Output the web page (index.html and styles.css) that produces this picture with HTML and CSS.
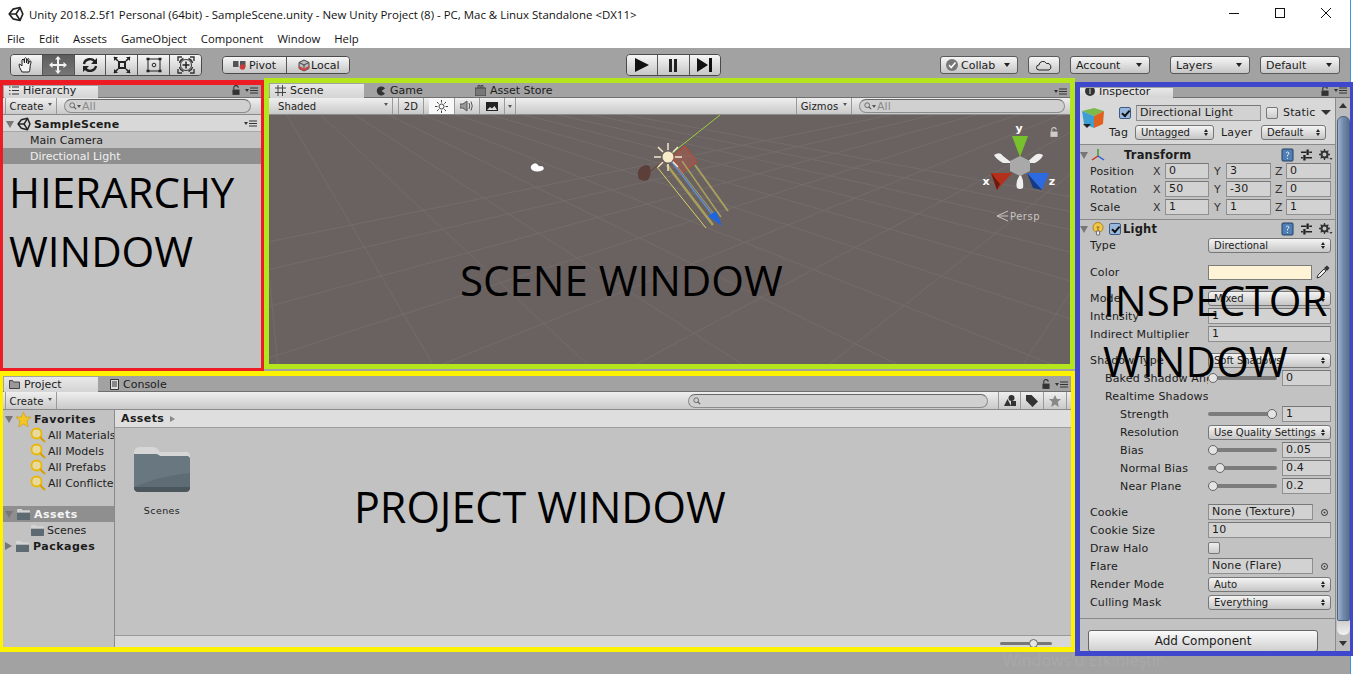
FILE: index.html
```html
<!DOCTYPE html>
<html lang="en">
<head>
  <meta charset="UTF-8">
  <title>Unity 2018.2.5f1 Personal</title>
  <link rel="stylesheet" href="styles.css">
</head>
<body>
  <svg class="defs" width="0" height="0">
    <symbol id="unity" viewBox="0 0 16 16">
      <path d="M1.200 8L5 3.200 12 1.500 14.800 8 12 14.500 5 12.800z" fill="none" stroke="#222" stroke-width="1.700" stroke-linejoin="round"/>
      <path d="M1.500 8H8L12 1.800M8 8l4 6.200" fill="none" stroke="#222" stroke-width="1.600"/>
    </symbol>
    <symbol id="mag" viewBox="0 0 16 16">
      <circle cx="6.500" cy="6.500" r="5" fill="#e8d9a0" stroke="#e8b800" stroke-width="1.800"/>
      <path d="M10 10l5 5" stroke="#d6a300" stroke-width="2.200"/>
    </symbol>
    <symbol id="folder" viewBox="0 0 16 14">
      <path d="M1 2q0-1 1-1h4l1 1.500h7q1 0 1 1V5H1z" fill="#d4d4d4"/>
      <path d="M1 5h14v7q0 1-1 1H2q-1 0-1-1z" fill="#5d6a72"/>
    </symbol>
    <symbol id="help" viewBox="0 0 13 14">
      <rect x="1" y="1" width="11" height="12" rx="1" fill="#4f7fb5" stroke="#243f60"/>
      <path d="M5 5q1.500-2 3 0 0 1.500-1.500 2v1.500M6.500 10v1" stroke="#dbe7f3" fill="none"/>
    </symbol>
    <symbol id="sliders" viewBox="0 0 12 12">
      <path d="M0 3h6M9 3h3M0 9h2M5 9h7" stroke="#222" stroke-width="1.500"/>
      <rect x="6" y="0" width="2.500" height="6" fill="#222"/>
      <rect x="2.500" y="6" width="2.500" height="6" fill="#222"/>
    </symbol>
    <symbol id="gear" viewBox="0 0 14 12">
      <circle cx="5.500" cy="5.500" r="3" fill="none" stroke="#333" stroke-width="2"/>
      <path d="M5.500 0v11M0 5.500h11M1.600 1.600l7.800 7.800M9.400 1.600l-7.800 7.800" stroke="#333" stroke-width="1.300" stroke-dasharray="2.500 6"/>
      <path d="M10.500 9h3l-1.500 2z" fill="#333"/>
    </symbol>
    <symbol id="lock" viewBox="0 0 9 11">
      <path d="M2 5V3a2.500 2.500 0 0 1 5 0" fill="none" stroke="currentColor" stroke-width="1.300"/>
      <rect x="0.500" y="5" width="8" height="6" fill="currentColor"/>
    </symbol>
    <symbol id="tabmenu" viewBox="0 0 13 7">
      <path d="M0 2h4L2 5z" fill="#333"/>
      <path d="M5 1h8M5 3.500h8M5 6h8" stroke="#333" stroke-width="1.200"/>
    </symbol>
    <symbol id="searchglass" viewBox="0 0 10 10">
      <circle cx="4" cy="4" r="3" fill="none" stroke="#555"/>
      <path d="M6 6l3 3" stroke="#555" stroke-width="1.300"/>
    </symbol>
  </svg>

  <header class="titlebar">
    <svg class="title-logo" width="16" height="16"><use href="#unity"/></svg>
    <span class="title-text">Unity 2018.2.5f1 Personal (64bit) - SampleScene.unity - New Unity Project (8) - PC, Mac &amp; Linux Standalone &lt;DX11&gt;</span>
    <div class="win-controls">
      <svg width="12" height="12" viewBox="0 0 12 12"><path d="M1 6.500h10" stroke="#111"/></svg>
      <svg width="12" height="12" viewBox="0 0 12 12"><rect x="1.500" y="1.500" width="9" height="9" fill="none" stroke="#111"/></svg>
      <svg width="12" height="12" viewBox="0 0 12 12"><path d="M1 1l10 10M11 1L1 11" stroke="#111"/></svg>
    </div>
  </header>
  <nav class="menubar">
    <span>File</span><span>Edit</span><span>Assets</span><span>GameObject</span><span>Component</span><span>Window</span><span>Help</span>
  </nav>

  <div class="toolbar">
    <div class="btn-group tools">
      <button class="tool">
        <svg width="18" height="18" viewBox="0 0 18 18"><path d="M5 16Q2 11 2 9t2 0l1 1V4q1-2 2 0l.5 3V2.500q1-1.500 2 0V7l1-4q1.500-1 1.500.5L11 8l2-3q1.500 0 1 1.500-1 3-1 5.500t-1 4z" fill="#f4f4f4" stroke="#222"/></svg>
      </button>
      <button class="tool active">
        <svg width="20" height="20" viewBox="0 0 20 20"><path d="M10 1l3 3.500h-2V9h4.500V7l3.500 3-3.500 3v-2H11v4.500h2L10 19l-3-3.500h2V11H4.500v2L1 10l3.500-3v2H9V4.500H7z" fill="#f2f2f2"/></svg>
      </button>
      <button class="tool">
        <svg width="18" height="18" viewBox="0 0 18 18"><path d="M3 8a6 6 0 0 1 11-2M15 10a6 6 0 0 1-11 2" fill="none" stroke="#222" stroke-width="2.400"/><path d="M16 2v6h-6zM2 16v-6h6z" fill="#222"/></svg>
      </button>
      <button class="tool">
        <svg width="18" height="18" viewBox="0 0 18 18"><rect x="6" y="6" width="6" height="6" fill="none" stroke="#222" stroke-width="2"/><path d="M1 1l4 4M17 1l-4 4M1 17l4-4M17 17l-4-4" stroke="#222" stroke-width="1.600"/><path d="M1 1h4L1 5zM17 1h-4l4 4zM1 17h4l-4-4zM17 17h-4l4-4z" fill="#222"/></svg>
      </button>
      <button class="tool">
        <svg width="18" height="18" viewBox="0 0 18 18"><rect x="3" y="3" width="12" height="12" fill="none" stroke="#222"/><circle cx="9" cy="9" r="1.800" fill="none" stroke="#222"/><path d="M1.500 3h3M13.500 3h3M1.500 15h3M13.500 15h3" stroke="#222" stroke-width="2.400"/></svg>
      </button>
      <button class="tool">
        <svg width="20" height="20" viewBox="0 0 20 20"><circle cx="10" cy="10" r="5.500" fill="none" stroke="#333"/><path d="M10 6.500v7M6.500 10h7" stroke="#222" stroke-width="1.500"/><path d="M2 6V2h4M14 2h4v4M2 14v4h4M14 18h4v-4M3.500 8q.5-3 4-4.500M12.500 3.500q3.500 1.500 4 4.500M3.500 12q.5 3 4 4.500M12.500 16.500q3.500-1.500 4-4.500" fill="none" stroke="#333" stroke-width="1.400"/></svg>
      </button>
    </div>
    <div class="btn-group pivot">
      <button class="pivot-btn">
        <svg width="13" height="11" viewBox="0 0 13 11"><rect x="0" y="1" width="5.500" height="6" fill="#555"/><rect x="7" y="1" width="5.500" height="6" fill="#555"/><circle cx="9.500" cy="7" r="2.800" fill="#cc3b3b"/></svg>
        Pivot
      </button>
      <button class="local-btn">
        <svg width="12" height="13" viewBox="0 0 12 13"><path d="M6 1l5 2.500v6L6 12 1 9.500v-6z" fill="#bbb" stroke="#444"/><path d="M1 7l5 2.500L11 7v2.500L6 12 1 9.500z" fill="#c44"/><path d="M1 3.500L6 6l5-2.500M6 6v3" fill="none" stroke="#444"/></svg>
        Local
      </button>
    </div>
    <div class="btn-group play">
      <button class="play-btn"><svg width="14" height="14" viewBox="0 0 14 14"><path d="M0 0l14 7-14 7z" fill="#111"/></svg></button>
      <button class="play-btn"><svg width="10" height="13" viewBox="0 0 10 13"><path d="M1 0h3v13H1zM6 0h3v13H6z" fill="#222"/></svg></button>
      <button class="play-btn"><svg width="15" height="14" viewBox="0 0 15 14"><path d="M0 0l11 7-11 7zM12 0h3v14h-3z" fill="#111"/></svg></button>
    </div>
    <button class="tb-btn collab">
      <svg width="12" height="12" viewBox="0 0 12 12"><circle cx="6" cy="6" r="6" fill="#777"/><path d="M3 6l2.200 2.500L9.500 3.500" stroke="#fff" stroke-width="1.500" fill="none"/></svg>
      <span>Collab</span><i class="caret"></i>
    </button>
    <button class="tb-btn cloud">
      <svg width="16" height="11" viewBox="0 0 16 11"><path d="M4 10H3a2.500 2.500 0 0 1 0-5 4 4 0 0 1 7.500-1.500A3.500 3.500 0 0 1 13 10z" fill="none" stroke="#222"/></svg>
    </button>
    <button class="tb-btn account"><span>Account</span><i class="caret"></i></button>
    <button class="tb-btn layers"><span>Layers</span><i class="caret"></i></button>
    <button class="tb-btn default-layout"><span>Default</span><i class="caret"></i></button>
  </div>

  <div class="workspace">
    <div class="left-col">
      <div class="top-row">

        <section class="hierarchy">
          <div class="tabstrip">
            <div class="tab">
              <svg width="10" height="9" viewBox="0 0 10 9"><path d="M0 1h1.500M3 1h7M0 4.500h1.500M3 4.500h7M0 8h1.500M3 8h7" stroke="#333"/></svg>
              Hierarchy
            </div>
            <div class="tab-tools"><svg class="lock" width="8" height="10"><use href="#lock"/></svg><svg width="13" height="7"><use href="#tabmenu"/></svg></div>
          </div>
          <div class="strip">
            <span class="strip-btn create">Create<i class="caret small"></i></span>
            <span class="search hier-search"><svg width="8" height="8"><use href="#searchglass"/></svg><i class="caret small"></i>All</span>
          </div>
          <div class="scene-row">
            <i class="fold open"></i>
            <svg width="14" height="14"><use href="#unity"/></svg>
            <b>SampleScene</b>
            <svg class="row-menu" width="13" height="7"><use href="#tabmenu"/></svg>
          </div>
          <div class="hier-item">Main Camera</div>
          <div class="hier-item selected">Directional Light</div>
          <div class="big-label hier-label">HIERARCHY<br>WINDOW</div>
        </section>

        <section class="scene">
          <div class="tabstrip">
            <div class="tab">
              <svg width="11" height="11" viewBox="0 0 11 11"><path d="M3 0v11M7.500 0v11M0 3h11M0 7.500h11" stroke="#444"/></svg>
              Scene
            </div>
            <div class="tab off game-tab">
              <svg width="10" height="10" viewBox="0 0 10 10"><path d="M9 2.500a4.500 4.500 0 1 0 0 5L5.500 5z" fill="#333"/></svg>
              Game
            </div>
            <div class="tab off store-tab">
              <svg width="11" height="11" viewBox="0 0 11 11"><path d="M0 3h11v8H0z" fill="#777" stroke="#444"/><path d="M3 3V.5h2V3M6 3V.5h2V3" fill="none" stroke="#444"/></svg>
              Asset Store
            </div>
            <div class="tab-tools"><svg width="13" height="7"><use href="#tabmenu"/></svg></div>
          </div>
          <div class="strip scene-strip">
            <span class="strip-btn shaded">Shaded<i class="caret small"></i></span>
            <span class="strip-btn two-d">2D</span>
            <span class="strip-btn light-btn">
              <svg width="13" height="13" viewBox="0 0 13 13"><circle cx="6.500" cy="6.500" r="2.500" fill="none" stroke="#444"/><path d="M6.500 0v2.500M6.500 10.500V13M0 6.500h2.500M10.500 6.500H13M2 2l1.700 1.700M9.300 9.300L11 11M11 2L9.300 3.700M3.700 9.300L2 11" stroke="#444"/></svg>
            </span>
            <span class="strip-btn audio-btn">
              <svg width="14" height="12" viewBox="0 0 14 12"><path d="M0 4h3l4-3v10L3 8H0z" fill="#999" stroke="#555"/><path d="M9 3q1.500 3 0 6M11 1.500q2.500 4.500 0 9" fill="none" stroke="#555"/></svg>
            </span>
            <span class="strip-btn image-btn">
              <svg width="12" height="9" viewBox="0 0 12 9"><rect width="12" height="9" fill="#222"/><path d="M1 8l3-3 2 1.500L8.500 4 11 8z" fill="#ddd"/></svg>
            </span>
            <span class="strip-btn image-arrow"><i class="caret small"></i></span>
            <span class="strip-btn gizmos">Gizmos<i class="caret small"></i></span>
            <span class="search scene-search"><svg width="8" height="8"><use href="#searchglass"/></svg><i class="caret small"></i>All</span>
          </div>
          <div class="scene-view">
            <svg class="scene-canvas" width="801" height="249" viewBox="0 0 801 249">
              <path class="grid-major" d="M-23-70L-310 260M-23-70L-150 260M-23-70L10 260M-23-70L170 260M-23-70L330 260M-23-70L490 260M-23-70L650 260M-23-70L810 260M-23-70L970 260M-23-70L1130 260M-23-70L1290 260M-23-70L1450 260M-23-70L1610 260M-23-70L1770 260"/>
              <path class="grid-major" d="M965-70L-653 260M965-70L-453 260M965-70L-253 260M965-70L-53 260M965-70L147 260M965-70L347 260M965-70L547 260M965-70L747 260M965-70L947 260M965-70L1147 260"/>

              <path d="M262 51q3-4 6-2 2 3 5 2 3 2 1 4-6 3-11 0-2-2-1-4z" fill="#fff"/>
              <path d="M372 52q6-4 9 0 2 7-2 13-5 2-9-1-3-7 2-12z" fill="#5a3f3a"/>
              <path d="M372 64L399 42" stroke="#6d3a30"/>
              <path d="M416 31l12 16-15 11-10-16z" fill="#b5574a" fill-opacity=".45" stroke="#c8442c"/>
              <path d="M398 42L451 0" stroke="#9ccf3a"/>
              <path d="M388 52L437 113" stroke="#d9cf63"/>
              <path d="M426 50L459 96" stroke="#a89f5d" stroke-width="2"/>
              <path d="M398 50L444 110" stroke="#a89f5d" stroke-width="2.500"/>
              <path d="M413 46L452 102" stroke="#a89f5d" stroke-width="1.500"/>
              <path d="M404 46L449 104" stroke="#a89f5d"/>
              <path d="M399 42L446 103" stroke="#5f8dd8" stroke-width="1.300"/>
              <path d="M439 101l8-5 6 15z" fill="#1e66e0"/>
              <circle cx="399" cy="42" r="5.500" fill="#f7ecc8"/>
              <path d="M399 28v7M399 49v7M385 42h7M406 42h7M389 32l5 5M404 47l5 5M409 32l-5 5M394 47l-5 5" stroke="#f2e8c4" stroke-width="1.500"/>

              <path d="M734 48q-7-4-9-8 6-4 9 1l9 7zM766 48q7-4 8-8-5-3-9 1l-8 7zM751 60q-5 7-3 13 3 2 6 0 1-7-2-13z" fill="#eee"/>
              <path d="M751 41l10 5v10l-10 5-10-5V46z" fill="#a9a9a9"/>
              <path d="M743 21h16l-8 21z" fill="#76c12c"/>
              <path d="M722 58h21l-15 17z" fill="#b5301a"/>
              <path d="M722 58l6 17 3-6z" fill="#6d1a0e"/>
              <path d="M758 58h22l-7 17z" fill="#2b6ae0"/>
              <path d="M758 58l15 17-9-2z" fill="#123a86"/>
              <text class="axis" x="750" y="17">y</text>
              <text class="axis" x="717" y="70">x</text>
              <text class="axis" x="783" y="70">z</text>
              <path d="M739 96l-11 5 11 5M728 101h11" fill="none" stroke="#c8c4c2"/>
              <text class="persp" x="741" y="105">Persp</text>
              <svg x="781" y="12" width="8" height="10" color="#cfcbc9"><use href="#lock"/></svg>
            </svg>
            <div class="big-label scene-label">SCENE WINDOW</div>
          </div>
        </section>
      </div>

      <section class="project">
        <div class="tabstrip">
          <div class="tab">
            <svg width="11" height="9" viewBox="0 0 11 9"><path d="M.5 8.500v-8h3l1 1.500h6v6.500z" fill="#999" stroke="#444"/></svg>
            Project
          </div>
          <div class="tab off console-tab">
            <svg width="9" height="11" viewBox="0 0 9 11"><path d="M.5.500h8v10h-8z" fill="#ddd" stroke="#333"/><path d="M2 3h5M2 5h5M2 7h5" stroke="#333"/></svg>
            Console
          </div>
          <div class="tab-tools"><svg class="lock" width="8" height="10"><use href="#lock"/></svg><svg width="13" height="7"><use href="#tabmenu"/></svg></div>
        </div>
        <div class="strip project-strip">
          <span class="strip-btn create">Create<i class="caret small"></i></span>
          <span class="search project-search"><svg width="8" height="8"><use href="#searchglass"/></svg></span>
          <span class="strip-btn icon-btn">
            <svg width="12" height="11" viewBox="0 0 12 11"><circle cx="7.500" cy="3" r="3" fill="#333"/><path d="M3.500 4L7 11H0z" fill="#333"/><rect x="7" y="6" width="5" height="5" fill="#333"/></svg>
          </span>
          <span class="strip-btn icon-btn">
            <svg width="12" height="12" viewBox="0 0 12 12"><path d="M0 0h5.500L12 6.500 6.500 12 0 5.500z" fill="#333"/></svg>
          </span>
          <span class="strip-btn icon-btn">
            <svg width="12" height="12" viewBox="0 0 12 12"><path d="M6 0l1.800 4H12L8.800 7l1 5L6 9.500 2.200 12l1-5L0 4h4.200z" fill="#888"/></svg>
          </span>
        </div>
        <div class="project-body">
          <div class="project-tree">
            <div class="tree-row top"><i class="fold open"></i>
              <svg width="15" height="15" viewBox="0 0 12 12"><path d="M6 0l1.800 4H12L8.800 7l1 5L6 9.500 2.200 12l1-5L0 4h4.200z" fill="#f3c623" stroke="#c89b10" stroke-width=".5"/></svg>
              <b>Favorites</b></div>
            <div class="tree-row search-item"><svg width="16" height="16"><use href="#mag"/></svg>All Materials</div>
            <div class="tree-row search-item"><svg width="16" height="16"><use href="#mag"/></svg>All Models</div>
            <div class="tree-row search-item"><svg width="16" height="16"><use href="#mag"/></svg>All Prefabs</div>
            <div class="tree-row search-item"><svg width="16" height="16"><use href="#mag"/></svg>All Conflicted</div>
            <div class="tree-row top selected assets-row"><i class="fold open"></i><svg width="15" height="13"><use href="#folder"/></svg><b>Assets</b></div>
            <div class="tree-row search-item"><svg width="15" height="13"><use href="#folder"/></svg>Scenes</div>
            <div class="tree-row top"><i class="fold"></i><svg width="15" height="13"><use href="#folder"/></svg><b>Packages</b></div>
          </div>
          <div class="project-main">
            <div class="breadcrumb"><b>Assets</b><i class="crumb-arrow"></i></div>
            <div class="asset-area">
              <div class="asset">
                <svg width="58" height="48" viewBox="0 0 58 48">
                  <path d="M1 8q0-6 6-6h12q5 0 7 4l1 1h26q4 0 4 4v8H1z" fill="#d6d6d6"/>
                  <path d="M1 9h20q4 0 6 2h26q4 0 4 4v27q0 5-5 5H6q-5 0-5-5z" fill="#5e6d75"/>
                  <path d="M1 9h20q4 0 6 2h26q4 0 4 4v13Q30 30 1 42z" fill="#687780"/>
                  <path d="M1 42v1q0 4 5 4h46q5 0 5-4v-1z" fill="#4a555c"/>
                </svg>
                <span>Scenes</span>
              </div>
              <div class="big-label project-label">PROJECT WINDOW</div>
            </div>
            <div class="project-footer"><span class="zoom-slider"><i></i></span></div>
          </div>
        </div>
      </section>
    </div>

    <aside class="inspector">
      <div class="tabstrip insp-tabs">
        <div class="tab">
          <svg width="10" height="10" viewBox="0 0 10 10"><circle cx="5" cy="5" r="5" fill="#333"/><path d="M5 2.500V8" stroke="#ddd"/></svg>
          Inspector
        </div>
        <div class="tab-tools"><svg class="lock" width="8" height="10"><use href="#lock"/></svg><svg width="13" height="7"><use href="#tabmenu"/></svg></div>
      </div>
      <div class="insp-wrap">
        <div class="insp-body">
          <div class="obj-head">
            <svg class="obj-icon" width="24" height="24" viewBox="0 0 24 24">
              <path d="M1 5l12-3 10 3-10 5z" fill="#7db84a"/>
              <path d="M1 5l12 5v12L3 18z" fill="#3d9fd1"/>
              <path d="M13 10l10-5-1 13-9 4z" fill="#e0601f"/>
              <path d="M2 18h8l-4 4z" fill="#222"/>
            </svg>
            <div class="obj-fields">
              <div class="obj-line">
                <span class="check on"></span>
                <span class="field name-field">Directional Light</span>
                <span class="check"></span>
                <span class="static-label">Static</span>
                <i class="caret big"></i>
              </div>
              <div class="obj-line second">
                <label class="tag-label">Tag</label>
                <span class="select tag-select">Untagged<i class="updown"></i></span>
                <label class="layer-label">Layer</label>
                <span class="select layer-select">Default<i class="updown"></i></span>
              </div>
            </div>
          </div>

          <div class="comp-head">
            <i class="fold open"></i>
            <svg class="comp-icon" width="14" height="14" viewBox="0 0 14 14"><path d="M7 8V1" stroke="#3aa02c" stroke-width="1.500"/><path d="M7 8l-6 4" stroke="#cc3322" stroke-width="1.500"/><path d="M7 8l6 4" stroke="#2c5cd0" stroke-width="1.500"/></svg>
            <b class="comp-title transform-title">Transform</b>
            <span class="comp-tools"><svg width="13" height="14"><use href="#help"/></svg><svg width="11" height="12"><use href="#sliders"/></svg><svg width="14" height="12"><use href="#gear"/></svg></span>
          </div>
          <div class="vec-row"><label>Position</label><em>X</em><span class="field">0</span><em>Y</em><span class="field">3</span><em>Z</em><span class="field">0</span></div>
          <div class="vec-row"><label>Rotation</label><em>X</em><span class="field">50</span><em>Y</em><span class="field">-30</span><em>Z</em><span class="field">0</span></div>
          <div class="vec-row"><label>Scale</label><em>X</em><span class="field">1</span><em>Y</em><span class="field">1</span><em>Z</em><span class="field">1</span></div>

          <div class="comp-head light-head">
            <i class="fold open"></i>
            <svg class="comp-icon" width="12" height="14" viewBox="0 0 12 14"><circle cx="6" cy="5.500" r="5" fill="#f2c84b" stroke="#a88420"/><path d="M4.500 9h3v4h-3z" fill="#eee" stroke="#777"/><path d="M4.500 5h3M6 5v4" stroke="#8a6a10"/></svg>
            <span class="check on"></span>
            <b class="comp-title">Light</b>
            <span class="comp-tools"><svg width="13" height="14"><use href="#help"/></svg><svg width="11" height="12"><use href="#sliders"/></svg><svg width="14" height="12"><use href="#gear"/></svg></span>
          </div>

          <div class="row"><label>Type</label><span class="select">Directional<i class="updown"></i></span></div>
          <div class="row gap-color"><label>Color</label><span class="color-wrap"><span class="swatch"></span>
            <svg width="14" height="14" viewBox="0 0 14 14"><path d="M1 13l1-3 6-6 2 2-6 6z" fill="#eee" stroke="#333"/><path d="M8 3l3-2.500 2.500 2.500-2.500 3z" fill="#333"/></svg></span></div>
          <div class="row gap"><label>Mode</label><span class="select">Mixed<i class="updown"></i></span></div>
          <div class="row"><label>Intensity</label><span class="field">1</span></div>
          <div class="row"><label>Indirect Multiplier</label><span class="field">1</span></div>
          <div class="row gap"><label>Shadow Type</label><span class="select">Soft Shadows<i class="updown"></i></span></div>
          <div class="row ind1"><label>Baked Shadow Angle</label><span class="slider"><span class="track"><i class="thumb at0"></i></span><span class="field">0</span></span></div>
          <div class="row ind1"><label>Realtime Shadows</label></div>
          <div class="row ind2"><label>Strength</label><span class="slider"><span class="track"><i class="thumb at100"></i></span><span class="field">1</span></span></div>
          <div class="row ind2"><label>Resolution</label><span class="select">Use Quality Settings<i class="updown"></i></span></div>
          <div class="row ind2"><label>Bias</label><span class="slider"><span class="track"><i class="thumb at0"></i></span><span class="field">0.05</span></span></div>
          <div class="row ind2"><label>Normal Bias</label><span class="slider"><span class="track"><i class="thumb at15"></i></span><span class="field">0.4</span></span></div>
          <div class="row ind2"><label>Near Plane</label><span class="slider"><span class="track"><i class="thumb at0"></i></span><span class="field">0.2</span></span></div>
          <div class="row gap"><label>Cookie</label><span class="obj-pick"><span class="field">None (Texture)</span><i class="target"></i></span></div>
          <div class="row"><label>Cookie Size</label><span class="field">10</span></div>
          <div class="row"><label>Draw Halo</label><span class="check"></span></div>
          <div class="row"><label>Flare</label><span class="obj-pick"><span class="field">None (Flare)</span><i class="target"></i></span></div>
          <div class="row"><label>Render Mode</label><span class="select">Auto<i class="updown"></i></span></div>
          <div class="row"><label>Culling Mask</label><span class="select">Everything<i class="updown"></i></span></div>

          <div class="add-wrap"><button class="add-btn">Add Component</button></div>
          <div class="big-label insp-label">INSPECTOR<br>WINDOW</div>
        </div>
        <div class="scrollbar">
          <i class="sb-up"></i>
          <div class="sb-thumb"></div>
          <div class="sb-cap"></div>
          <i class="sb-down"></i>
        </div>
      </div>
    </aside>
  </div>
  <div class="watermark">Windows'u Etkinleştir</div>
</body>
</html>
```

FILE: styles.css
```css
* {
  box-sizing: border-box;
}
html, body {
  margin: 0;
  height: 674px;
  overflow: hidden;
}
body {
  position: relative;
  background: linear-gradient(90deg, #a2a2a2 1350px, #3a96dd 1350px, #3a96dd 1351px, #fff 1351px);
  font-family: "DejaVu Sans", sans-serif;
  font-size: 11px;
  color: #1c1c1c;
}
.defs {
  position: absolute;
}
svg {
  display: block;
  flex: none;
}
button {
  font: inherit;
  color: inherit;
  padding: 0;
  margin: 0;
}
label {
  display: block;
}

/* title + menu */
.titlebar {
  height: 28px;
  background: linear-gradient(90deg, #fff 1350px, #3a96dd 1350px, #3a96dd 1351px, #fff 1351px);
  display: flex;
  align-items: center;
  padding-left: 8px;
  font-family: "Open Sans", sans-serif;
  font-size: 11.46px;
  color: #111;
}
.title-text {
  margin-left: 5px;
}
.win-controls {
  margin-left: auto;
  display: flex;
  gap: 34px;
  padding: 0 21px 2px 0;
}
.menubar {
  height: 20px;
  background: linear-gradient(90deg, #fff 1350px, #3a96dd 1350px, #3a96dd 1351px, #fff 1351px);
  display: flex;
  gap: 14px;
  padding: 1px 0 0 7px;
  align-items: center;
  font-family: "Open Sans", sans-serif;
  font-size: 11.35px;
  color: #111;
}

/* toolbar */
.toolbar {
  height: 30px;
  display: flex;
  align-items: center;
  padding-top: 6px;
  padding-bottom: 2px;
}
.btn-group {
  display: flex;
  border: 1px solid #4a4a4a;
  border-radius: 4px;
  overflow: hidden;
}
.btn-group button {
  background: linear-gradient(#f6f6f6, #c6c6c6);
  border: 0;
  border-right: 1px solid #555;
  display: flex;
  align-items: center;
  justify-content: center;
}
.btn-group button:last-child {
  border-right: 0;
}
.tools {
  margin-left: 10px;
  width: 192px;
  height: 22px;
}
.tool {
  flex: 1;
}
.tool.active {
  background: linear-gradient(#5c5c5c, #767676) !important;
}
.pivot {
  margin-left: 20px;
  height: 18px;
}
.pivot-btn, .local-btn {
  gap: 3px;
  justify-content: flex-start !important;
}
.pivot-btn {
  width: 64px;
  padding-left: 10px;
}
.local-btn {
  width: 62px;
  padding-left: 11px;
  gap: 1px;
}
.play {
  margin-left: 276px;
  height: 22px;
  width: 95px;
}
.play-btn {
  flex: 1;
}
.tb-btn {
  height: 18px;
  background: linear-gradient(#f6f6f6, #c6c6c6);
  border: 1px solid #5a5a5a;
  border-radius: 3px;
  display: flex;
  align-items: center;
  padding: 0 5px;
}
.tb-btn .caret {
  margin-left: auto;
}
.collab {
  margin-left: 219px;
  width: 78px;
  gap: 3px;
}
.cloud {
  margin-left: 10px;
  width: 32px;
  justify-content: center;
}
.account {
  margin-left: 10px;
  width: 80px;
}
.layers {
  margin-left: 20px;
  width: 80px;
}
.default-layout {
  margin-left: 10px;
  width: 80px;
}
.caret {
  display: inline-block;
  width: 0;
  height: 0;
  border-left: 3px solid transparent;
  border-right: 3px solid transparent;
  border-top: 4px solid #222;
  margin-right: 2px;
}
.caret.small {
  border-left-width: 2.5px;
  border-right-width: 2.5px;
  border-top-width: 3px;
  border-top-color: #555;
  margin: 0 0 3px 5px;
}
.caret.big {
  border-left-width: 5px;
  border-right-width: 5px;
  border-top-width: 5px;
  border-top-color: #333;
}

/* workspace frames */
.workspace {
  position: relative;
  z-index: 1;
  display: flex;
  align-items: flex-start;
}
.left-col {
  width: 1075px;
  flex: none;
}
.top-row {
  display: flex;
  height: 293px;
}
.hierarchy {
  position: relative;
  width: 264px;
  height: 291px;
  margin-top: 2px;
  border: solid #ed1c24;
  border-width: 5px 3px 3px;
  background: #c2c2c2;
  overflow: hidden;
}
.scene {
  position: relative;
  width: 811px;
  height: 291px;
  border: 5px solid #b5e61d;
  background: #c2c2c2;
  overflow: hidden;
  display: flex;
  flex-direction: column;
}
.project {
  height: 281px;
  border: solid #fff200;
  border-width: 5px 4px 5px 3px;
  background: #c2c2c2;
  overflow: hidden;
  display: flex;
  flex-direction: column;
}
.inspector {
  width: 278px;
  height: 574px;
  margin-top: 4px;
  border: solid #3f48cc;
  border-width: 5px 3px 5px 5px;
  background: #c2c2c2;
  overflow: hidden;
  display: flex;
  flex-direction: column;
}

/* tabs */
.tabstrip {
  height: 15px;
  background: #a2a2a2;
  border-bottom: 1px solid #6f6f6f;
  display: flex;
  align-items: flex-end;
  flex: none;
  position: relative;
}
.hierarchy .tabstrip {
  height: 13px;
}
.hierarchy .tab {
  padding-bottom: 3px;
}
.scene .tabstrip {
  height: 15px;
}
.scene .tab {
  padding-bottom: 1px;
}
.project .tabstrip {
  height: 16px;
}
.tab {
  height: 100%;
  width: 94px;
  margin-left: 1px;
  background: linear-gradient(#e8e8e8, #d4d4d4);
  display: flex;
  align-items: center;
  gap: 4px;
  padding-left: 5px;
  margin-bottom: -1px;
  white-space: nowrap;
}
.tab.off {
  background: none;
  margin-left: 0;
}
.game-tab {
  padding-left: 12px;
  width: 99px;
}
.store-tab {
  padding-left: 12px;
  width: 120px;
}
.console-tab {
  padding-left: 12px;
  width: 100px;
}
.tab-tools {
  margin-left: auto;
  display: flex;
  align-items: center;
  gap: 5px;
  padding: 0 3px 2px 0;
  color: #333;
}
.insp-tabs {
  height: 11px;
}
.insp-tabs .tab {
  margin-left: 0;
  width: 93px;
  padding-left: 5px;
  padding-bottom: 4px;
  overflow: hidden;
}
.insp-tabs .tab-tools svg:first-child {
  margin-bottom: -1px;
}

/* panel toolbars */
.strip {
  height: 17px;
  background: linear-gradient(#efefef, #c9c9c9);
  border-bottom: 1px solid #8a8a8a;
  display: flex;
  align-items: stretch;
  flex: none;
  font-size: 10px;
  letter-spacing: .1px;
}
.strip-btn {
  display: flex;
  align-items: center;
  justify-content: center;
  border-right: 1px solid #9a9a9a;
}
.create {
  width: 52px;
  margin-left: 2px;
  border-left: 1px solid #9a9a9a;
}
.search {
  display: flex;
  align-items: center;
  height: 14px;
  margin-top: 1px;
  border: 1px solid #8c8c8c;
  border-top-color: #666;
  border-radius: 7px;
  background: #d0d0d0;
  padding-left: 4px;
  color: #8a8a8a;
  font-size: 11px;
}
.search .caret.small {
  margin: 0 1px 0 0;
}
.hier-search {
  margin-left: 7px;
  width: 187px;
}
.shaded {
  width: 124px;
  justify-content: space-between;
  padding: 0 4px 0 9px;
  margin-left: 0;
}
.two-d {
  width: 26px;
  margin-left: 5px;
  border-left: 1px solid #9a9a9a;
}
.light-btn {
  width: 26px;
  margin-left: 5px;
  background: #f8f8f8;
}
.audio-btn, .image-btn {
  width: 25px;
}
.image-arrow {
  width: 11px;
}
.image-arrow .caret.small {
  margin: 0;
}
.gizmos {
  margin-left: auto;
  width: 56px;
  border-left: 1px solid #9a9a9a;
}
.scene-search {
  width: 206px;
  margin: 1px 5px 0 7px;
}
.scene-view {
  position: relative;
  flex: 1;
  background: #6a6260;
  overflow: hidden;
}
.scene-canvas text {
  font-family: "DejaVu Sans", sans-serif;
}
.grid-major {
  stroke: #736c6a;
  stroke-width: 1;
  fill: none;
}
.axis {
  fill: #fff;
  font-size: 11px;
  font-weight: bold;
  text-anchor: middle;
}
.persp {
  fill: #c8c4c2;
  font-size: 10px;
  letter-spacing: .5px;
}

/* hierarchy */
.scene-row {
  height: 17px;
  background: #d8d8d8;
  border-bottom: 1px solid #a8a8a8;
  display: flex;
  align-items: center;
  padding: 2px 0 0 2px;
  position: relative;
}
.scene-row svg {
  margin-left: 3px;
}
.scene-row b {
  margin-left: 3px;
  letter-spacing: .2px;
}
.row-menu {
  position: absolute;
  right: 4px;
  top: 5px;
}
.hier-item {
  height: 16px;
  line-height: 17px;
  padding-left: 27px;
}
.hier-item.selected {
  background: #8f8f8f;
  color: #f0f0f0;
}
.fold {
  display: inline-block;
  width: 0;
  height: 0;
  flex: none;
  border-top: 4px solid transparent;
  border-bottom: 4px solid transparent;
  border-left: 7px solid #777;
  margin-left: 2px;
}
.fold.open {
  border-left: 4px solid transparent;
  border-right: 4px solid transparent;
  border-top: 7px solid #777;
  border-bottom: 0;
  margin-left: 1px;
}

/* big annotation labels */
.big-label {
  position: absolute;
  font-family: "Open Sans", sans-serif;
  font-size: 42px;
  line-height: 59px;
  color: #000;
  white-space: nowrap;
}
.hier-label {
  left: 6px;
  top: 77px;
}
.scene-label {
  left: 191px;
  top: 135px;
}
.project-label {
  left: 239px;
  top: 49px;
  font-size: 43px;
}
.insp-label {
  left: 23px;
  top: 171px;
  line-height: 61px;
}

/* project */
.project-strip {
  height: 18px;
}
.project-strip .create {
  padding-top: 1px;
}
.project-search {
  margin-left: auto;
  width: 300px;
  margin-top: 2px;
}
.icon-btn {
  width: 23px;
}
.project-search + .icon-btn {
  margin-left: 10px;
  border-left: 1px solid #9a9a9a;
}
.icon-btn:last-child {
  margin-right: 4px;
}
.project-body {
  flex: 1;
  display: flex;
  min-height: 0;
}
.project-tree {
  width: 112px;
  flex: none;
  border-right: 1px solid #8a8a8a;
  overflow: hidden;
  padding-top: 1px;
}
.tree-row {
  height: 16px;
  display: flex;
  align-items: center;
  white-space: nowrap;
}
.tree-row.top {
  padding-left: 2px;
  gap: 3px;
}
.tree-row.top .fold {
  margin-left: 0;
}
.tree-row b {
  letter-spacing: .5px;
}
.search-item {
  padding-left: 27px;
  gap: 2px;
}
.assets-row {
  margin-top: 15px;
}
.tree-row.selected {
  background: #8f8f8f;
  color: #f4f4f4;
}
.project-main {
  flex: 1;
  display: flex;
  flex-direction: column;
  min-width: 0;
}
.breadcrumb {
  height: 18px;
  flex: none;
  background: #dedede;
  border-bottom: 1px solid #9c9c9c;
  display: flex;
  align-items: center;
  padding-left: 6px;
  gap: 6px;
}
.breadcrumb b {
  letter-spacing: .4px;
}
.crumb-arrow {
  width: 0;
  height: 0;
  border-top: 3px solid transparent;
  border-bottom: 3px solid transparent;
  border-left: 5px solid #888;
}
.asset-area {
  position: relative;
  flex: 1;
}
.asset {
  position: absolute;
  left: 17px;
  top: 17px;
  width: 60px;
  display: flex;
  flex-direction: column;
  align-items: center;
  gap: 12px;
  font-size: 9.5px;
  letter-spacing: .4px;
}
.project-footer {
  height: 12px;
  flex: none;
  background: #d8d8d8;
  border-top: 1px solid #999;
  display: flex;
  justify-content: flex-end;
  align-items: center;
  padding: 4px 19px 0 0;
}
.zoom-slider {
  width: 52px;
  height: 3px;
  background: #777;
  border-radius: 2px;
  position: relative;
}
.zoom-slider i {
  position: absolute;
  right: 14px;
  top: -3px;
  width: 9px;
  height: 9px;
  border-radius: 50%;
  background: #e6e6e6;
  border: 1px solid #666;
}

/* inspector */
.insp-wrap {
  flex: 1;
  display: flex;
  min-height: 0;
}
.insp-body {
  position: relative;
  width: 256px;
  flex: none;
  border-right: 1px solid #8a8a8a;
  overflow: hidden;
  letter-spacing: .15px;
}
.obj-head {
  height: 47px;
  background: #d8d8d8;
  border-bottom: 1px solid #8a8a8a;
  display: flex;
  padding: 7px 0 0 1px;
}
.obj-icon {
  margin-top: 1px;
}
.obj-fields {
  margin-left: 14px;
  flex: 1;
}
.obj-line {
  display: flex;
  align-items: center;
  height: 15px;
}
.obj-line.second {
  margin-top: 5px;
  margin-left: -10px;
}
.name-field {
  width: 125px;
  height: 15px;
  margin: 0 5px;
}
.static-label {
  margin: 0 6px 0 5px;
}
.tag-label {
  width: 26px;
  text-align: left;
}
.tag-select {
  width: 79px !important;
  margin-left: 0;
}
.layer-label {
  margin: 0 8px 0 7px;
  width: 32px;
}
.layer-select {
  width: 65px !important;
}
.check {
  display: inline-block;
  position: relative;
  width: 12px;
  height: 12px;
  flex: none;
  background: linear-gradient(#eee, #ccc);
  border: 1px solid #777;
  border-radius: 2px;
}
.check.on {
  background: #9ab8dd;
  border-color: #3c5c88;
}
.check.on::after {
  content: "";
  position: absolute;
  left: 1px;
  top: 0;
  width: 6px;
  height: 3px;
  border-left: 2px solid #111;
  border-bottom: 2px solid #111;
  transform: rotate(-48deg) translate(-1px, 2px);
}
.field {
  display: block;
  background: #d2d2d2;
  border: 1px solid #8f8f8f;
  border-top-color: #777;
  height: 16px;
  line-height: 14px;
  padding-left: 3px;
  color: #1c1c1c;
  white-space: nowrap;
  overflow: hidden;
}
.select {
  display: block;
  position: relative;
  height: 15px;
  line-height: 13px;
  border: 1px solid #777;
  border-radius: 3px;
  background: linear-gradient(#f4f4f4, #c6c6c6);
  padding-left: 5px;
  font-size: 10px;
  letter-spacing: 0;
  white-space: nowrap;
  overflow: hidden;
}
.updown {
  position: absolute;
  right: 5px;
  top: 3px;
  width: 0;
  height: 0;
  border-left: 2px solid transparent;
  border-right: 2px solid transparent;
  border-bottom: 3px solid #222;
}
.updown::after {
  content: "";
  position: absolute;
  left: -2px;
  top: 4px;
  border-left: 2px solid transparent;
  border-right: 2px solid transparent;
  border-top: 3px solid #222;
}
.comp-head {
  height: 16px;
  display: flex;
  align-items: center;
  position: relative;
  margin-top: 1px;
  padding-top: 2px;
}
.comp-head .fold.open {
  margin-left: 0;
}
.comp-icon {
  margin-left: 3px;
}
.transform-title {
  margin-left: 19px;
}
.comp-title {
  font-size: 11.5px;
  letter-spacing: .2px;
}
.light-head {
  border-top: 1px solid #8a8a8a;
  margin-top: 3px;
  height: 17px;
  padding-top: 2px;
}
.light-head .comp-icon {
  margin: 0 5px 0 4px;
}
.light-head .comp-title {
  margin-left: 2px;
}
.comp-tools {
  margin-left: auto;
  display: flex;
  align-items: center;
  gap: 7px;
  padding-right: 2px;
}
.vec-row {
  height: 18px;
  display: grid;
  grid-template-columns: 63px 12px 44px 5px 12px 45px 4px 11px 45px;
  align-items: center;
  padding-left: 10px;
}
.vec-row label {
  grid-column: 1;
}
.vec-row em {
  font-style: normal;
  color: #333;
}
.vec-row em:nth-of-type(2) {
  grid-column: 5;
}
.vec-row em:nth-of-type(3) {
  grid-column: 8;
}
.row {
  height: 18px;
  display: grid;
  grid-template-columns: 118px 123px;
  align-items: center;
  padding-left: 10px;
  white-space: nowrap;
}
.row.gap {
  margin-top: 8px;
}
.row.gap-color {
  margin-top: 9px;
}
.row label {
  overflow: hidden;
}
.ind1 {
  padding-left: 25px;
  grid-template-columns: 103px 123px;
}
.ind2 {
  padding-left: 40px;
  grid-template-columns: 88px 123px;
}
.color-wrap {
  display: flex;
  align-items: center;
  gap: 4px;
}
.swatch {
  display: block;
  width: 104px;
  height: 15px;
  background: #fff4d6;
  border: 1px solid #7c7c7c;
}
.slider {
  display: flex;
  align-items: center;
  gap: 5px;
}
.slider .field {
  width: 49px;
  flex: none;
}
.track {
  position: relative;
  display: block;
  flex: 1;
  height: 4px;
  background: #7c7c7c;
  border-radius: 2px;
}
.thumb {
  position: absolute;
  top: -3px;
  width: 10px;
  height: 10px;
  border-radius: 50%;
  background: #e4e4e4;
  border: 1px solid #666;
}
.at0 {
  left: 0;
}
.at15 {
  left: 7px;
}
.at100 {
  right: 0;
}
.obj-pick {
  display: flex;
  align-items: center;
}
.obj-pick .field {
  width: 105px;
}
.target {
  width: 7px;
  height: 7px;
  margin-left: 8px;
  border-radius: 50%;
  border: 1px solid #333;
  background: radial-gradient(#333 25%, transparent 30%);
}
.add-wrap {
  margin-top: 7px;
  border-top: 1px solid #8a8a8a;
  padding: 11px 0 0 8px;
}
.add-btn {
  display: block;
  width: 230px;
  height: 22px;
  background: linear-gradient(#fbfbfb, #cfcfcf);
  border: 1px solid #666;
  border-radius: 3px;
  font-size: 12px;
}
.scrollbar {
  flex: 1;
  background: #bcbcbc;
  position: relative;
  display: flex;
  flex-direction: column;
  align-items: center;
  padding-top: 5px;
}
.sb-up, .sb-down {
  width: 0;
  height: 0;
  border-left: 4px solid transparent;
  border-right: 4px solid transparent;
  flex: none;
}
.sb-up {
  border-bottom: 5px solid #333;
}
.sb-down {
  border-top: 5px solid #333;
  margin-top: 6px;
}
.sb-thumb {
  width: 13px;
  height: 505px;
  margin-top: 8px;
  background: linear-gradient(90deg, #9fb2cc, #7089ab 50%, #5a7092);
  border: 1px solid #4f6480;
  border-radius: 6px 6px 2px 2px;
  flex: none;
}
.sb-cap {
  width: 13px;
  height: 14px;
  background: linear-gradient(#cfcfcf, #f2f2f2);
  border-radius: 0 0 6px 6px;
  flex: none;
}

.watermark {
  position: absolute;
  left: 1003px;
  top: 649px;
  font-family: "Open Sans", sans-serif;
  font-size: 16px;
  color: #a9a9a9;
}
```
